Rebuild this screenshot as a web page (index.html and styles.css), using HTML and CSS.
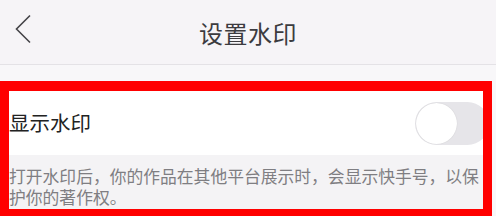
FILE: index.html
```html
<!DOCTYPE html>
<html lang="zh-CN">
<head>
<meta charset="utf-8">
<title>设置水印</title>
<link rel="stylesheet" href="styles.css">
</head>
<body>
<header class="topbar">
  <svg class="back" width="18" height="30" viewBox="0 0 18 30" aria-hidden="true">
    <path d="M16 1.5 L2.5 15 L16 28.5" fill="none" stroke="#454448" stroke-width="1.6"/>
  </svg>
  <h1 class="title">设置水印</h1>
</header>
<div class="gap"></div>
<section class="marked">
  <div class="row">
    <span class="row-label">显示水印</span>
    <span class="toggle"><span class="knob"></span></span>
  </div>
  <p class="desc">打开水印后，你的作品在其他平台展示时，会显示快手号，以保护你的著作权。</p>
</section>
</body>
</html>
```
FILE: styles.css
```css
html, body {
  margin: 0;
  padding: 0;
}
body {
  width: 496px;
  height: 216px;
  overflow: hidden;
  background: #f8f7f9;
  font-family: "Noto Sans CJK SC", "Noto Sans", sans-serif;
}
.topbar {
  height: 64px;
  background: #f6f4f7;
  border-bottom: 1px solid #e4e2e6;
  display: flex;
  align-items: center;
  justify-content: center;
  position: relative;
}
.back {
  position: absolute;
  left: 14px;
  top: 14px;
}
.title {
  margin: 0;
  font-size: 24px;
  font-weight: 400;
  color: #3c3b3f;
  letter-spacing: 0.5px;
}
.gap {
  height: 16px;
  background: #f8f7f9;
}
.marked {
  width: 474px;
  border: solid #ff0000;
  border-width: 10px 9px 10px 9px;
  background: #ffffff;
}
.row {
  height: 64px;
  background: #ffffff;
  display: flex;
  align-items: center;
  justify-content: space-between;
  overflow: hidden;
}
.row-label {
  font-size: 20.5px;
  color: #222222;
  padding-bottom: 3px;
}
.toggle {
  width: 74px;
  height: 43px;
  border-radius: 22px;
  background: #e6e5e9;
  margin-right: -6px;
  display: flex;
  align-items: center;
}
.knob {
  width: 41px;
  height: 41px;
  border-radius: 50%;
  background: #ffffff;
  margin-left: 1px;
  box-shadow: 0 0 1px rgba(0,0,0,0.18);
}
.desc {
  margin: 0;
  background: #f4f3f5;
  padding: 11px 0 2px 0;
  font-size: 16.8px;
  line-height: 20.5px;
  color: #7f7e82;
}
```
